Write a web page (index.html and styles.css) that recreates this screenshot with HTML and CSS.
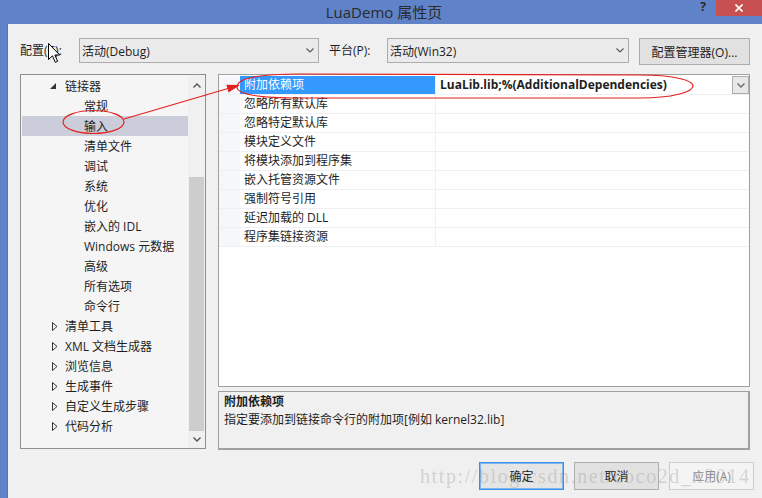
FILE: index.html
```html
<!DOCTYPE html>
<html lang="zh-CN">
<head>
<meta charset="utf-8">
<title>LuaDemo 属性页</title>
<link rel="stylesheet" href="styles.css">
</head>
<body>
<div class="window">
  <div class="titlebar">
    <div></div>
    <div class="title">LuaDemo 属性页</div>
    <div class="controls">
      <span class="help">?</span>
      <span class="close"><svg width="8" height="8" viewBox="0 0 8 8"><path d="M0.5 0.5 L7.5 7.5 M7.5 0.5 L0.5 7.5" stroke="#fff" stroke-width="1.6" fill="none"/></svg></span>
    </div>
  </div>
  <div class="frame">
    <div class="edge"></div>
    <div class="client">
      <div class="toolbar">
        <span class="lbl lbl1">配置(C):</span>
        <div class="combo c1"><span>活动(Debug)</span><svg class="chev" width="8" height="5" viewBox="0 0 8 5"><polyline points="0.5,0.5 4,4 7.5,0.5" fill="none" stroke="#555" stroke-width="1.1"/></svg></div>
        <span class="lbl lbl2">平台(P):</span>
        <div class="combo c2"><span>活动(Win32)</span><svg class="chev" width="8" height="5" viewBox="0 0 8 5"><polyline points="0.5,0.5 4,4 7.5,0.5" fill="none" stroke="#555" stroke-width="1.1"/></svg></div>
        <button class="btn mgr">配置管理器(O)...</button>
      </div>

      <div class="main">
        <div class="tree">
          <div class="list">
            <div class="row l1"><span class="tw"><svg width="6" height="6" viewBox="0 0 6 6"><polygon points="6,0 6,6 0,6" fill="#333"/></svg></span>链接器</div>
            <div class="row l2">常规</div>
            <div class="row l2 sel">输入</div>
            <div class="row l2">清单文件</div>
            <div class="row l2">调试</div>
            <div class="row l2">系统</div>
            <div class="row l2">优化</div>
            <div class="row l2">嵌入的 IDL</div>
            <div class="row l2">Windows 元数据</div>
            <div class="row l2">高级</div>
            <div class="row l2">所有选项</div>
            <div class="row l2">命令行</div>
            <div class="row l1"><span class="tw"><svg class="col" width="6" height="9" viewBox="0 0 6 9"><polygon points="0.5,0.5 5,4.5 0.5,8.5" fill="none" stroke="#333" stroke-width="1"/></svg></span>清单工具</div>
            <div class="row l1"><span class="tw"><svg class="col" width="6" height="9" viewBox="0 0 6 9"><polygon points="0.5,0.5 5,4.5 0.5,8.5" fill="none" stroke="#333" stroke-width="1"/></svg></span>XML 文档生成器</div>
            <div class="row l1"><span class="tw"><svg class="col" width="6" height="9" viewBox="0 0 6 9"><polygon points="0.5,0.5 5,4.5 0.5,8.5" fill="none" stroke="#333" stroke-width="1"/></svg></span>浏览信息</div>
            <div class="row l1"><span class="tw"><svg class="col" width="6" height="9" viewBox="0 0 6 9"><polygon points="0.5,0.5 5,4.5 0.5,8.5" fill="none" stroke="#333" stroke-width="1"/></svg></span>生成事件</div>
            <div class="row l1"><span class="tw"><svg class="col" width="6" height="9" viewBox="0 0 6 9"><polygon points="0.5,0.5 5,4.5 0.5,8.5" fill="none" stroke="#333" stroke-width="1"/></svg></span>自定义生成步骤</div>
            <div class="row l1"><span class="tw"><svg class="col" width="6" height="9" viewBox="0 0 6 9"><polygon points="0.5,0.5 5,4.5 0.5,8.5" fill="none" stroke="#333" stroke-width="1"/></svg></span>代码分析</div>
          </div>
          <div class="vscroll">
            <div class="sbtn up"><svg width="8" height="5" viewBox="0 0 8 5"><polyline points="0.5,4.5 4,1 7.5,4.5" fill="none" stroke="#555" stroke-width="1.4"/></svg></div>
            <div class="track"><div class="thumb"></div></div>
            <div class="sbtn down"><svg width="8" height="5" viewBox="0 0 8 5"><polyline points="0.5,0.5 4,4 7.5,0.5" fill="none" stroke="#555" stroke-width="1.4"/></svg></div>
          </div>
        </div>

        <div class="right">
          <div class="grid">
            <div class="grow first">
              <div class="gut"></div>
              <div class="gname selname">附加依赖项</div>
              <div class="gval"><b class="val">LuaLib.lib;%(AdditionalDependencies)</b><span class="ddbtn"><svg width="8" height="5" viewBox="0 0 8 5"><polyline points="0.5,0.5 4,4 7.5,0.5" fill="none" stroke="#666" stroke-width="1.3"/></svg></span></div>
            </div>
            <div class="grow"><div class="gut"></div><div class="gname">忽略所有默认库</div><div class="gval"></div></div>
            <div class="grow"><div class="gut"></div><div class="gname">忽略特定默认库</div><div class="gval"></div></div>
            <div class="grow"><div class="gut"></div><div class="gname">模块定义文件</div><div class="gval"></div></div>
            <div class="grow"><div class="gut"></div><div class="gname">将模块添加到程序集</div><div class="gval"></div></div>
            <div class="grow"><div class="gut"></div><div class="gname">嵌入托管资源文件</div><div class="gval"></div></div>
            <div class="grow"><div class="gut"></div><div class="gname">强制符号引用</div><div class="gval"></div></div>
            <div class="grow"><div class="gut"></div><div class="gname">延迟加载的 DLL</div><div class="gval"></div></div>
            <div class="grow"><div class="gut"></div><div class="gname">程序集链接资源</div><div class="gval"></div></div>
          </div>
          <div class="desc">
            <div class="dtitle">附加依赖项</div>
            <div>指定要添加到链接命令行的附加项[例如 kernel32.lib]</div>
          </div>
        </div>
      </div>

      <div class="actions">
        <button class="btn act default">确定</button>
        <button class="btn act">取消</button>
        <button class="btn act disabled">应用(A)</button>
      </div>
    </div>
  </div>
</div>

<div class="watermark">http://blog.csdn.net/coco2d_x2014</div>

<svg class="annot" width="762" height="498" viewBox="0 0 762 498">
  <ellipse cx="93.5" cy="122" rx="30.5" ry="11.5" fill="none" stroke="#E4201E" stroke-width="1.2"/>
  <line x1="124" y1="119" x2="228" y2="88.5" stroke="#E4201E" stroke-width="1.3"/>
  <polygon points="240,85 228.6,92.5 226.4,84.8" fill="#E4201E"/>
  <path d="M237,87 C237,78 262,74 300,74 L640,75 C672,75 693,80 693,86 C693,92 672,98 640,98 L300,98 C262,98 237,95 237,87 Z" fill="none" stroke="#E4201E" stroke-width="1.2"/>
</svg>

<svg class="cursor" width="13" height="21" viewBox="0 0 13 21">
  <path d="M0.5,0.5 L0.5,16.5 L4.5,12.8 L7.3,19.3 L9.6,18.3 L6.9,12 L11.8,12 Z" fill="#fff" stroke="#000" stroke-width="1" stroke-linejoin="miter"/>
</svg>
</body>
</html>
```

FILE: styles.css
```css
* { box-sizing: border-box; }
html, body { margin: 0; padding: 0; }
body {
  width: 762px;
  height: 498px;
  overflow: hidden;
  position: relative;
  background: #F0F0F0;
  font-family: "Open Sans", "Noto Sans CJK SC", sans-serif;
  font-size: 12px;
  color: #1E1E1E;
}

.window { display: flex; flex-direction: column; height: 498px; }

.titlebar {
  height: 24px;
  flex-shrink: 0;
  background: #5F82C8;
  display: grid;
  grid-template-columns: 1fr auto 1fr;
}
.title { font-size: 15px; line-height: 24px; color: #2A2A2A; padding-left: 6px; }
.controls { display: flex; justify-content: flex-end; align-items: flex-start; }
.help { font-size: 12px; font-weight: bold; line-height: 14px; color: #2A2A2A; margin-right: 10px; }
.close {
  width: 46px; height: 16px;
  background: #C75050;
  display: flex; align-items: center; justify-content: center;
}

.frame { flex: 1; display: flex; }
.edge { width: 8px; background: #5F82C8; border-right: 1px solid #5574B4; }
.client { flex: 1; display: flex; flex-direction: column; padding: 14px 0 0 12px; background: #F0F0F0; }

/* top toolbar */
.toolbar { display: flex; align-items: flex-start; height: 27px; }
.lbl { line-height: 25px; white-space: nowrap; }
.lbl1 { width: 59px; }
.lbl2 { width: 58px; margin-left: 10px; }
.combo {
  height: 25px;
  border: 1px solid #ACACAC;
  background: #EBEBEB;
  display: flex; align-items: center; justify-content: space-between;
  padding: 0 4px 0 2px;
}
.c1 { width: 240px; }
.c2 { width: 242px; }
.chev { display: block; }

.btn {
  font: inherit;
  color: #1E1E1E;
  background: #E1E1E1;
  border: 1px solid #ADADAD;
  padding: 0;
}
.mgr { width: 111px; height: 27px; margin-left: 10px; }

/* main area */
.main { display: flex; align-items: flex-start; gap: 12px; margin-top: 9px; height: 376px; }

.tree {
  width: 186px; height: 375px;
  border: 1px solid #8E8F8F;
  background: #F5F5F5;
  display: flex;
}
.list { flex: 1; padding: 1px 0 0 1px; }
.row { height: 20px; display: flex; align-items: center; white-space: nowrap; }
.row.l1 { padding-left: 28px; }
.row.l2 { padding-left: 62px; }
.row.sel { background: #CBCDDA; }
.tw { width: 15px; display: flex; align-items: center; }
.tw svg { display: block; margin-top: -1px; }
.tw svg.col { margin-left: 2px; margin-top: 0; }

.vscroll { width: 17px; display: flex; flex-direction: column; background: #F0F0F0; }
.sbtn { display: flex; align-items: center; justify-content: center; }
.sbtn svg { display: block; }
.sbtn.up { height: 20px; }
.sbtn.down { height: 17px; }
.track { flex: 1; padding-top: 82px; display: flex; flex-direction: column; }
.thumb { flex: 1; background: #CDCDCD; margin: 0 1px 0 1px; }

.right { width: 532px; display: flex; flex-direction: column; gap: 4px; }
.grid { height: 313px; border: 1px solid #A0A0A0; background: #fff; padding-top: 1px; }
.grow { display: flex; height: 19px; border-bottom: 1px solid #F0F0F3; }
.gut { width: 21px; background: #F5F7FB; }
.gname { width: 196px; padding-left: 4px; border-right: 1px solid #F0F0F3; line-height: 18px; white-space: nowrap; }
.gname.selname { background: #3399FF; color: #fff; }
.gval { flex: 1; padding-left: 4px; line-height: 18px; display: flex; align-items: flex-start; }
.val { font-weight: bold; white-space: nowrap; }
.ddbtn {
  margin-left: auto;
  width: 17px; height: 18px;
  border: 1px solid #ACACAC;
  background: #E8E8E8;
  display: flex; align-items: center; justify-content: center;
}
.ddbtn svg { display: block; }

.desc {
  height: 59px;
  border: 1px solid #A0A0A0;
  border-right-width: 2px;
  border-bottom-width: 2px;
  background: #F0F0F0;
  padding: 1px 5px;
  line-height: 18px;
}
.dtitle { font-weight: bold; }

/* dialog buttons */
.actions { display: flex; justify-content: flex-end; gap: 10px; padding-right: 8px; margin-top: 12px; }
.act { width: 85px; height: 28px; }
.act.default { border: 1px solid #3C8FE6; box-shadow: inset 0 0 0 1px #7DB7F0; background: #E5E5E5; }
.act.disabled { border-color: #CCCCCC; background: #F4F4F4; color: #8E8E8E; }

/* overlays */
.watermark {
  position: absolute;
  left: 420px; top: 466px;
  font-family: "Liberation Serif", serif;
  font-size: 20px;
  line-height: 20px;
  letter-spacing: 1.6px;
  color: rgba(150, 150, 150, 0.35);
  white-space: nowrap;
  pointer-events: none;
}
.annot { position: absolute; left: 0; top: 0; pointer-events: none; }
.cursor { position: absolute; left: 48px; top: 43px; pointer-events: none; }
```
